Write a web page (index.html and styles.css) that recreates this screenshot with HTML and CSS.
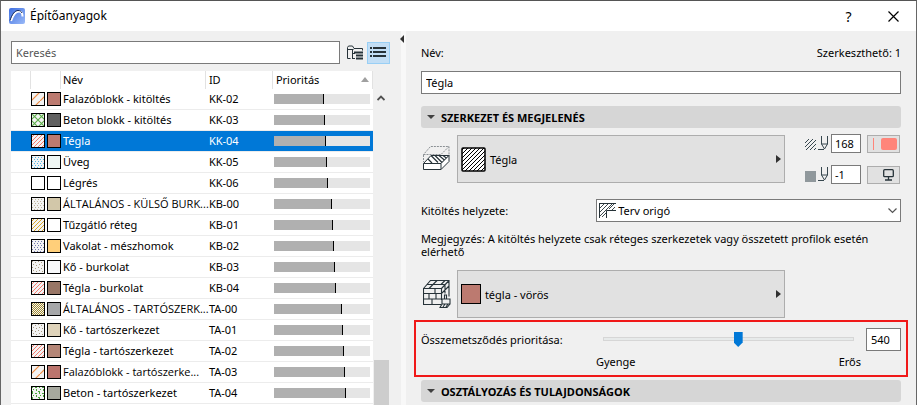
FILE: index.html
```html
<!DOCTYPE html>
<html lang="hu">
<head>
<meta charset="utf-8">
<title>Építőanyagok</title>
<link rel="stylesheet" href="styles.css">
</head>
<body>
<svg class="defs" aria-hidden="true">
  <defs>
    <pattern id="diag-wide" width="9" height="9" patternUnits="userSpaceOnUse"><path d="M-1 10 10-1" stroke="#f08a40" stroke-width="1.2"/></pattern>
    <pattern id="cross" width="7" height="7" patternUnits="userSpaceOnUse"><path d="M0 7 7 0M0 0 7 7" stroke="#5cae48" stroke-width="1.1"/></pattern>
    <pattern id="diag-red" width="4" height="4" patternUnits="userSpaceOnUse"><path d="M-1 5 5-1M-1 1 1-1M3 5 5 3" stroke="#f5786c" stroke-width="1"/></pattern>
    <pattern id="diag-gold" width="4" height="4" patternUnits="userSpaceOnUse"><path d="M-1 5 5-1M-1 1 1-1M3 5 5 3" stroke="#d9a72c" stroke-width="1"/></pattern>
    <pattern id="dots-blue" width="3" height="4" patternUnits="userSpaceOnUse"><path d="M0 0h1v1H0zM1 2h1v1H1z" fill="#4fb8e8"/></pattern>
    <pattern id="dots-tan" width="3" height="4" patternUnits="userSpaceOnUse"><path d="M0 0h1v1H0zM1 2h1v1H1z" fill="#bdb49a"/></pattern>
    <pattern id="dots-violet" width="3" height="4" patternUnits="userSpaceOnUse"><path d="M0 0h1v1H0zM1 2h1v1H1z" fill="#7278b0"/></pattern>
    <pattern id="sparse" width="6" height="6" patternUnits="userSpaceOnUse"><path d="M1 1h1v1H1zM4 2h1v1H4zM2 4h1v1H2zM5 5h1v1H5z" fill="#a89a80"/></pattern>
    <pattern id="check" width="2" height="2" patternUnits="userSpaceOnUse"><path d="M0 0h1v1H0zM1 1h1v1H1z" fill="#a48c30"/></pattern>
    <pattern id="green" width="7" height="6" patternUnits="userSpaceOnUse"><path d="M1 0h1v2H1zM4 1h2v1H4zM2 3h1v1H2zM5 3h1v2H5zM0 5h2v1H0z" fill="#4aa53c"/></pattern>
    <pattern id="diag-black" width="4" height="4" patternUnits="userSpaceOnUse"><path d="M-1 5 5-1M-1 1 1-1M3 5 5 3" stroke="#000" stroke-width="1"/></pattern>
  </defs>
</svg>
<div class="window">
  <header class="titlebar">
    <svg class="logo" width="16" height="16" viewBox="0 0 16 16" aria-hidden="true"><defs><linearGradient id="lg" x2="1" y2="1"><stop stop-color="#3f6fe0"/><stop offset="1" stop-color="#9abaf8"/></linearGradient></defs><rect width="16" height="16" rx="2" fill="url(#lg)"/><path d="M2 13C4 7 7 3.500 10 3.500c2.500 0 3.500 2 3.500 5" fill="none" stroke="#fff" stroke-width="2"/><path d="M1 12.500C3 6 6 2.500 9 2.500c2 0 3 .7 4 2.500" fill="none" stroke="#182a55" stroke-width="1"/></svg>
    <h1>Építőanyagok</h1>
    <button class="sys help" aria-label="Súgó">?</button>
    <button class="sys" aria-label="Bezárás"><svg width="11" height="11" viewBox="0 0 11 11"><path d="M.5.5l10 10M10.500.5l-10 10" stroke="#000" stroke-width="1.200"/></svg></button>
  </header>
  <main class="content">
    <section class="browser">
      <div class="tools">
        <input class="field search" type="text" placeholder="Keresés" aria-label="Keresés">
        <button class="view" aria-label="Mappák"><svg width="17" height="16" viewBox="0 0 17 16" fill="none" stroke="#263238"><path d="M3.500 13.500h-3v-11l1-1.500h4l1.500 2.500h8.500v2M.5 4.500h6"/><path d="M5.500 5v9M5 8.500h3M5 13.500h3"/><path d="M7 7.500h9M9 10.500h7M9 13.500h7" stroke-width="2"/></svg></button>
        <button class="view active" aria-label="Lista"><svg width="16" height="11" viewBox="0 0 16 11" fill="#263238"><path d="M0 0h2v2H0zM3 0h13v2H3zM0 4h2v2H0zM3 4h13v2H3zM0 8h2v2H0zM3 8h13v2H3z"/></svg></button>
      </div>
      <div class="list">
        <table>
          <colgroup><col class="c-gap"><col class="c-swatch"><col><col class="c-id"><col class="c-pri"></colgroup>
          <thead><tr><th></th><th></th><th>Név</th><th>ID</th><th><span class="sort">Prioritás<i></i></span></th></tr></thead>
          <tbody id="rows"></tbody>
        </table>
        <div class="scroll"><svg width="8" height="6" viewBox="0 0 8 6"><path d="M.5 5 4 1.500 7.500 5" fill="none" stroke="#505050" stroke-width="1.800"/></svg><span class="thumb"></span></div>
      </div>
    </section>
    <button class="splitter" aria-label="Panel összecsukása"><i></i></button>
    <section class="details">
      <div class="name-row"><label for="name">Név:</label><span>Szerkeszthető: 1</span></div>
      <input class="field" id="name" type="text" value="Tégla">
      <button class="heading"><i></i>SZERKEZET ÉS MEGJELENÉS</button>
      <div class="attribute">
        <svg class="symbol" width="28" height="26" viewBox="0 0 28 26" fill="none" stroke="#263238"><path d="M.5 9.500v-1l7-8h18.500v8M.5 8.500H18l8-8M18 9v8M.5 9v7" stroke="#8b9094" stroke-dasharray="2 1"/><path d="M.5 17.500 8 9.500h18l-8 8z" fill="#fff"/><path d="M8 9.500l7 7M12 9.500l7 7M16 9.500l6 5M20 9.500l4 3M5 13l4 4" stroke-width="1.200"/><path d="M.5 17.500H18v6H.5zM18 17.500l8-8v6l-8 8" fill="#fff"/></svg>
        <button class="picker"><svg width="25" height="25" viewBox="0 0 25 25"><rect x="1" y="1" width="23" height="23" rx="1" fill="#fff"/><rect x="1" y="1" width="23" height="23" rx="1" fill="url(#diag-black)" stroke="#000" stroke-width="1.500"/></svg><span>Tégla</span><i></i></button>
        <div class="pens">
          <svg width="24" height="15" viewBox="0 0 24 15" fill="none" stroke="#37474f"><path d="M0 7 4 3M0 11 8 3M1 14 11 4M5 14l6-6M9 14l2-2"/><path d="M13 13.500h6M16.500 0v8l3 5 3-5V0M16.500 8h6"/></svg>
          <input class="field" type="text" value="168" aria-label="Kitöltés toll">
          <button class="pen" aria-label="Toll színe"><span class="pen-line"></span><span class="pen-color"></span></button>
          <svg width="24" height="15" viewBox="0 0 24 15" fill="none" stroke="#37474f"><path d="M0 4h11v11H0z" fill="#90989c" stroke="none"/><path d="M13 13.500h6M16.500 0v8l3 5 3-5V0M16.500 8h6"/></svg>
          <input class="field" type="text" value="-1" aria-label="Háttér toll">
          <button class="pen" aria-label="Háttér színe"><svg width="11" height="12" viewBox="0 0 11 12" fill="none" stroke="#263238" stroke-width="1.300"><rect x=".7" y=".7" width="9.600" height="7" rx="1"/><path d="M5.500 8v3M2 11h7"/></svg></button>
        </div>
      </div>
      <div class="orientation">
        <label for="origin">Kitöltés helyzete:</label>
        <div class="combo">
          <select id="origin" class="field"><option>Terv origó</option></select>
          <svg class="combo-icon" width="17" height="15" viewBox="0 0 17 15" fill="none" stroke="#263238"><path d="M0 .5h17M.5 0v15M7.500 15V7.500H17" /><path d="M1 5l4-4M1 9l8-8M1 13l12-12M3 14l4-4M10 6l5-5M13 7l3-3" stroke-width=".9"/></svg>
          <svg class="combo-arrow" width="9" height="6" viewBox="0 0 9 6"><path d="M.5.500 4.500 4.500 8.500.5" fill="none" stroke="#555" stroke-width="1.200"/></svg>
        </div>
      </div>
      <p class="note">Megjegyzés: A kitöltés helyzete csak réteges szerkezetek vagy összetett profilok esetén elérhető</p>
      <div class="attribute">
        <svg class="symbol" width="28" height="28" viewBox="0 0 28 28" fill="none" stroke="#263238" stroke-width="1.100"><path d="M18 24.500H.5v-16H18.500V20M.5 8.500l7-8h18.500v16M18.500 8.500l7.500-8M.5 13.500h18M.5 19h18M12 8.500v5M6 13.500V19M13 13.500V19M9 19v5M4 4.500h17.500M14 .5l-4 4M22 .5l-4 4M10 4.500l-4 4M22 4.500v9M19 13l7-7"/><path d="M21.500 19v-4h2v4M19 19h8v5h-8zM19 24l-2 3.500h7l3-3.500M20 27l2-3M23 27l2-3" fill="#f0f0f0"/></svg>
        <button class="picker surface"><span class="surface-color"></span><span>tégla - vörös</span><i></i></button>
      </div>
      <div class="priority">
        <label for="pri">Összemetsződés prioritása:</label>
        <div class="slider"><input id="pri" type="range" min="0" max="999" value="540"><div class="ends"><span>Gyenge</span><span>Erős</span></div></div>
        <input class="field" type="text" value="540" aria-label="Prioritás értéke">
      </div>
      <button class="heading last"><i></i>OSZTÁLYOZÁS ÉS TULAJDONSÁGOK</button>
    </section>
  </main>
</div>
<script src="script.js"></script>
</body>
</html>
```
FILE: styles.css
```css
* { box-sizing: border-box; }
body { margin: 0; background: #f0f0f0; color: #000; }
body, input, button, select { font: 11px/13px "Noto Sans", "Open Sans", sans-serif; }
button { padding: 0; border: 0; background: none; color: inherit; }
svg { display: block; flex: none; }
.defs { position: absolute; width: 0; height: 0; }
.window { height: 100vh; overflow: hidden; display: flex; flex-direction: column; border: 1px solid #666; border-top-color: #555; border-bottom: 0; }
.titlebar { flex: none; height: 30px; display: flex; align-items: center; padding: 0 17px 0 8px; background: #fff; }
.titlebar h1 { margin: 0 auto 0 5px; font-size: 12px; line-height: 16px; font-weight: 400; }
.sys { width: 11px; height: 20px; display: grid; place-items: center; }
.help { margin-right: 34px; font-size: 14px; }
.content { flex: 1; min-height: 0; display: flex; }
.field { min-width: 0; width: 100%; height: 23px; padding: 0 4px; border: 1px solid #7a7a7a; border-radius: 0; background: #fff; color: #000; outline: 0; }
.field::placeholder { color: #555; opacity: 1; }

.browser { flex: none; width: 42.5%; padding: 10px 0 0 10px; display: flex; flex-direction: column; }
.tools { display: flex; align-items: center; margin-bottom: 7px; }
.tools .search { flex: 1; }
.view { flex: none; width: 23px; height: 22px; display: grid; place-items: center; }
.view:first-of-type { margin-left: 4px; }
.view.active { border: 1px solid #99cff5; background: #c2def5; }
.list { flex: 1; min-height: 0; display: flex; overflow: hidden; }
table { flex: 1; align-self: flex-start; table-layout: fixed; width: 100%; border-spacing: 0; background: #fff; }
.c-gap { width: 20px; }
.c-swatch { width: 30px; }
.c-id { width: 67px; }
.c-pri { width: 100px; }
th { height: 18px; padding: 0 3px 2px 2px; border-right: 1px solid #e2e2e2; font-weight: 400; text-align: left; }
td { height: 21px; padding: 0 0 2px 2px; border-bottom: 1px solid #ececec; white-space: nowrap; }
th:nth-child(4), td:nth-child(4), th:nth-child(5) { padding-left: 3px; }
td:nth-child(2) { padding: 0; }
td:nth-child(5) { padding: 0 3px 0 1px; }
.long { font-family: "Open Sans", "Noto Sans", sans-serif; }
.selected td { background: #0078d7; color: #fff; }
.sort { display: flex; justify-content: space-between; align-items: center; }
.sort i { border: 4px solid transparent; border-top: 0; border-bottom: 5px solid #a0a0a0; }
.swatches { display: flex; gap: 2px; }
.meter { height: 10px; background: #e5e5e5; }
.meter span { display: block; height: 100%; background: #b0b0b0; border-right: 1px solid #000; }
.scroll { flex: none; width: 17px; padding: 0 1px; display: flex; flex-direction: column; align-items: center; }
.scroll svg { margin: 24px 0 auto; }
.thumb { width: 15px; height: 45px; background: #cdcdcd; }

.splitter { flex: none; width: 16px; padding: 4px 0 0 10px; border: 0; display: flex; align-items: flex-start; background: linear-gradient(90deg, #f0f0f0 11px, #f8f8f8 11px); }
.splitter i { border: 4px solid transparent; border-left: 0; border-right-color: #303030; }

.details { flex: 1; min-width: 0; padding: 15px 15px 0; display: flex; flex-direction: column; }
.name-row { display: flex; justify-content: space-between; margin-bottom: 12px; }
.heading { flex: none; width: 100%; height: 22px; margin: 12px 0 6px; padding: 0 6px; display: flex; align-items: center; gap: 6px; border-radius: 3px; background: #d6d6d6; font-weight: 700; text-align: left; }
.heading i { border: 4px solid transparent; border-bottom: 0; border-top-color: #404040; }
.attribute { display: flex; align-items: center; }
.symbol { margin-left: 2px; }
.picker { flex: 1; height: 48px; margin-left: 6px; padding: 0 3px; display: flex; align-items: center; gap: 4px; border: 1px solid #adadad; background: #e1e1e1; }
.picker i { margin-left: auto; border: 4px solid transparent; border-right: 0; border-left: 5px solid #303030; }
.surface { margin-right: 116px; }
.surface-color { width: 20px; height: 20px; border: 1px solid #000; background: #bc7a70; }
.pens { display: grid; grid-template-columns: 26px 30px 40px; row-gap: 12px; align-items: center; margin-left: 20px; width: 96px; }
.pens .field { height: 19px; padding: 0 3px; }
.pen { width: 33px; height: 18px; margin-left: 6px; padding: 0 2px; display: flex; align-items: center; justify-content: flex-end; gap: 7px; border: 1px solid #adadad; background: #e1e1e1; }
.pen svg { margin-right: 3px; }
.pen-line { width: 1px; height: 12px; background: #ff857a; }
.pen-color { width: 16px; height: 12px; border-radius: 2px; background: #ff857a; }
.orientation { display: flex; align-items: center; justify-content: space-between; margin: 15px 0 10px; }
.combo { position: relative; width: 63.5%; }
.combo select { appearance: none; padding-left: 21px; line-height: 18px; }
.combo-icon { position: absolute; left: 3px; top: 4px; }
.combo-arrow { position: absolute; right: 4px; top: 9px; }
.note { margin: 0 0 12px; }
.priority { flex: none; height: 57px; margin: 2px -7px 3px; padding: 6px 5px; display: grid; grid-template-columns: 182px 1fr 35px; border: 2px solid #f01818; }
.priority label { padding-top: 5px; }
.slider { padding: 3px 12px 0 0; }
.slider input { display: block; appearance: none; width: 100%; height: 16px; margin: 0; background: none; }
.slider input::-webkit-slider-runnable-track { height: 4px; border: 1px solid #d6d6d6; background: #e7eaea; }
.slider input::-webkit-slider-thumb { appearance: none; width: 9px; height: 15px; margin-top: -6px; background: #0078d7; clip-path: polygon(0 0, 100% 0, 100% 70%, 50% 100%, 0 70%); }
.ends { display: flex; justify-content: space-between; margin: 8px -7px 0; }
.heading.last { margin: 0; }
```
FILE: script.js
```js
const materials = [
  ["Falazóblokk - kitöltés", "KK-02", "diag-wide", "#bc7a70", 50],
  ["Beton blokk - kitöltés", "KK-03", "cross", "#606060", 51],
  ["Tégla", "KK-04", "diag-red", "#bc7a70", 52],
  ["Üveg", "KK-05", "dots-blue", "#eff6f3", 53],
  ["Légrés", "KK-06", null, "#ffffff", 54],
  ["ÁLTALÁNOS - KÜLSŐ BURK...", "KB-00", "dots-tan", "#d2c7a9", 58],
  ["Tűzgátló réteg", "KB-01", "diag-gold", "#ffffff", 59],
  ["Vakolat - mészhomok", "KB-02", "dots-violet", "#ffcf7a", 60],
  ["Kő - burkolat", "KB-03", "sparse", "#f7f8fa", 61],
  ["Tégla - burkolat", "KB-04", "diag-red", "#987666", 62],
  ["ÁLTALÁNOS - TARTÓSZERK...", "TA-00", "check", "#a6a7a9", 68],
  ["Kő - tartószerkezet", "TA-01", "sparse", "#dfd3ba", 69],
  ["Tégla - tartószerkezet", "TA-02", "diag-red", "#b58677", 70],
  ["Falazóblokk - tartószerke...", "TA-03", "diag-wide", "#bb746d", 71],
  ["Beton - tartószerkezet", "TA-04", "green", "#a6a89e", 72],
  ["", "", null, "#ffffff", 73]
];
const swatch = (fill, base) =>
  `<svg width="14" height="14" viewBox="0 0 14 14"><rect x=".5" y=".5" width="13" height="13" fill="${base}"/><rect x=".5" y=".5" width="13" height="13" fill="${fill}" stroke="#000"/></svg>`;
document.getElementById("rows").innerHTML = materials.map(([name, id, hatch, color, level]) =>
  `<tr class="${id === "KK-04" ? "selected" : ""}"><td></td><td><div class="swatches">${swatch(hatch ? `url(#${hatch})` : "#fff", hatch ? "#f3f3f3" : "#fff")}${swatch(color, color)}</div></td><td class="${name.endsWith("...") ? "long" : ""}">${name}</td><td>${id}</td><td><div class="meter"><span style="width:${level / 96 * 100}%"></span></div></td></tr>`
).join("");
```
